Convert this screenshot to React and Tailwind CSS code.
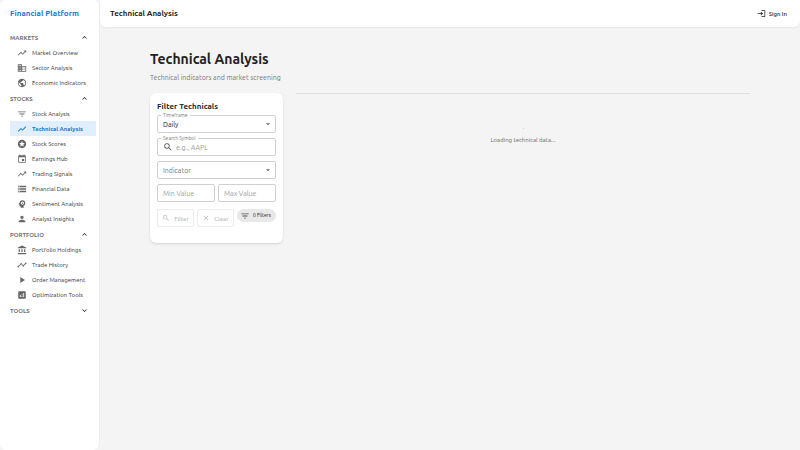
import {
  MdTrendingUp, MdBusiness, MdPublic, MdFilterList, MdShowChart, MdStars, MdEvent, MdStorage,
  MdPsychology, MdPerson, MdAccountBalance, MdTimeline, MdPlayArrow, MdAnalytics, MdExpandLess,
  MdExpandMore, MdLogin, MdSearch, MdClear, MdArrowDropDown,
} from "react-icons/md";

const sections = [
  {
    title: "MARKETS",
    items: [
      ["Market Overview", MdTrendingUp],
      ["Sector Analysis", MdBusiness],
      ["Economic Indicators", MdPublic],
    ],
  },
  {
    title: "STOCKS",
    items: [
      ["Stock Analysis", MdFilterList],
      ["Technical Analysis", MdShowChart],
      ["Stock Scores", MdStars],
      ["Earnings Hub", MdEvent],
      ["Trading Signals", MdTrendingUp],
      ["Financial Data", MdStorage],
      ["Sentiment Analysis", MdPsychology],
      ["Analyst Insights", MdPerson],
    ],
  },
  {
    title: "PORTFOLIO",
    items: [
      ["Portfolio Holdings", MdAccountBalance],
      ["Trade History", MdTimeline],
      ["Order Management", MdPlayArrow],
      ["Optimization Tools", MdAnalytics],
    ],
  },
  { title: "TOOLS", items: [] },
];

function Sidebar() {
  return (
    <aside className="w-[100px] shrink-0 rounded-md border-r border-[#ececec] bg-white pr-[3px] pl-[10px]">
      <div className="mb-[2px] flex h-[27px] items-center text-[8px] font-bold whitespace-nowrap text-[#1976d2]">
        Financial Platform
      </div>
      <nav>
        {sections.map(({ title, items }) => (
          <div key={title}>
            <button type="button" className="flex h-4 w-full items-center justify-between pr-[7px] text-[6px] font-bold text-[#707070]">
              {title}
              {items.length ? (
                <MdExpandLess className="size-[9px] text-[#222222]" />
              ) : (
                <MdExpandMore className="size-[9px] text-[#222222]" />
              )}
            </button>
            {items.map(([label, Icon]) => {
              const active = label === "Technical Analysis";
              return (
                <a
                  key={label}
                  href="#"
                  aria-current={active ? "page" : undefined}
                  className={
                    active
                      ? "flex h-[15px] items-center gap-[5px] bg-[#e1eefb] pl-[7px] text-[6px] font-bold whitespace-nowrap text-[#1976d2]"
                      : "flex h-[15px] items-center gap-[5px] pl-[7px] text-[6px] whitespace-nowrap text-[#333333]"
                  }
                >
                  <Icon className={active ? "size-[10px]" : "size-[10px] text-[#666666]"} />
                  {label}
                </a>
              );
            })}
          </div>
        ))}
      </nav>
    </aside>
  );
}

const box = "flex h-[18px] items-center rounded-xs border border-[#d0d0d0] text-[7px]";
const floating = "absolute -top-[3px] left-1 bg-white px-0.5 text-[5px] leading-[7px] text-[#777777]";
const action =
  "flex h-[18px] w-[37px] items-center justify-center gap-1 rounded-xs border border-[#ececec] text-[6px] font-medium text-[#bbbbbb]";

function Filters() {
  return (
    <form className="w-[133px] shrink-0 rounded-md bg-white px-[7px] pt-2 pb-4 shadow-sm">
      <h2 className="mb-[2px] text-[8px] leading-3 font-bold text-[#222222]">Filter Technicals</h2>
      <div className="flex flex-col gap-[5px]">
        <div className="relative">
          <label htmlFor="timeframe" className={floating}>
            Timeframe
          </label>
          <div className={box}>
            <select id="timeframe" className="w-full appearance-none pl-[5px] text-[#222222]">
              <option>Daily</option>
            </select>
            <MdArrowDropDown className="mr-[2px] size-[10px] shrink-0 text-[#666666]" />
          </div>
        </div>
        <div className="relative">
          <label htmlFor="symbol" className={floating}>
            Search Symbol
          </label>
          <div className={box}>
            <MdSearch className="mr-[3px] ml-[5px] size-[10px] shrink-0 text-[#555555]" />
            <input id="symbol" placeholder="e.g., AAPL" className="w-full min-w-0 placeholder:text-[#999999]" />
          </div>
        </div>
        <div className={box}>
          <select aria-label="Indicator" className="w-full appearance-none pl-[5px] text-[#777777]">
            <option>Indicator</option>
          </select>
          <MdArrowDropDown className="mr-[2px] size-[10px] shrink-0 text-[#666666]" />
        </div>
        <div className="flex gap-[3px]">
          <div className={box}>
            <input aria-label="Min Value" placeholder="Min Value" className="w-full min-w-0 pl-[5px] placeholder:text-[#a0a0a0]" />
          </div>
          <div className={box}>
            <input aria-label="Max Value" placeholder="Max Value" className="w-full min-w-0 pl-[5px] placeholder:text-[#a0a0a0]" />
          </div>
        </div>
        <div className="flex items-start gap-[3px] pt-[2px]">
          <button type="button" disabled className={action}>
            <MdSearch className="size-2" />
            Filter
          </button>
          <button type="button" disabled className={action}>
            <MdClear className="size-2" />
            Clear
          </button>
          <span className="flex h-[13px] flex-1 items-center gap-[3px] rounded-full bg-[#e8e8e8] pl-[3px] text-[5px] whitespace-nowrap text-[#222222]">
            <MdFilterList className="size-[10px] text-[#555555]" />
            0 Filters
          </span>
        </div>
      </div>
    </form>
  );
}

export default function App() {
  return (
    <div className="flex min-h-screen bg-[#f4f4f4] font-['Ubuntu','Noto_Sans',sans-serif]">
      <Sidebar />
      <div className="min-w-0 flex-1">
        <header className="flex h-[27px] items-center justify-between rounded-b-md bg-white pr-[13px] pl-[10px] shadow-xs">
          <div className="text-[8px] font-bold text-[#222222]">Technical Analysis</div>
          <button type="button" className="flex items-center gap-[3px] text-[6px] font-medium text-[#222222]">
            <MdLogin className="size-[9px]" />
            Sign In
          </button>
        </header>
        <main className="mx-auto max-w-[700px] px-[50px] pt-[22px]">
          <h1 className="text-[14px] leading-5 font-bold text-[#222222]">Technical Analysis</h1>
          <p className="mt-[2px] mb-[10px] text-[7px] leading-3 text-[#777777]">Technical indicators and market screening</p>
          <div className="flex gap-[13px]">
            <Filters />
            <section className="flex-1 border-t border-[#e0e0e0] text-center">
              <div className="mx-auto mt-[34px] size-px bg-[#bcd3ea]" />
              <p className="mt-[6px] text-[6px] leading-[10px] text-[#666666]">Loading technical data...</p>
            </section>
          </div>
        </main>
      </div>
    </div>
  );
}
